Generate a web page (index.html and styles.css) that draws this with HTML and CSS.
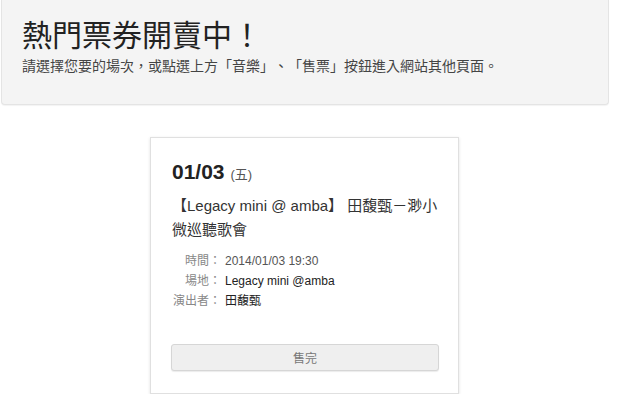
FILE: index.html
```html
<!DOCTYPE html>
<html lang="zh-Hant">
<head>
    <meta charset="UTF-8">
    <meta name="viewport" content="width=device-width, initial-scale=1.0">
    <title>熱門票券開賣中</title>
    <link rel="stylesheet" href="styles.css">
</head>
<body>
    <div class="page">
        <div class="jumbotron">
            <h1>熱門票券開賣中！</h1>
            <p>請選擇您要的場次，或點選上方「音樂」、「售票」按鈕進入網站其他頁面。</p>
        </div>

        <div class="events">
            <div class="event-card">
                <h3 class="event-date">01/03 <small>(五)</small></h3>
                <h4 class="event-title">【Legacy mini @ amba】 田馥甄－渺小微巡聽歌會</h4>
                <dl class="event-info">
                    <dt>時間：</dt>
                    <dd>2014/01/03 19:30</dd>
                    <dt>場地：</dt>
                    <dd class="dark">Legacy mini @amba</dd>
                    <dt>演出者：</dt>
                    <dd class="dark">田馥甄</dd>
                </dl>
                <button class="btn-soldout" disabled>售完</button>
            </div>
        </div>
    </div>
</body>
</html>
```

FILE: styles.css
```css
body {
    margin: 0;
    padding: 0;
    font-family: 'Liberation Sans', 'Noto Sans CJK TC', sans-serif;
    color: #333;
    background-color: #fff;
    text-spacing-trim: space-all;
}

.page {
    width: 609px;
}

.jumbotron {
    margin-left: 1px;
    height: 104px;
    padding: 0 20px;
    background-color: #f4f4f4;
    border: 1px solid #e4e4e4;
    border-top: none;
    border-radius: 0 0 4px 4px;
    box-shadow: 0 1px 1px rgba(0, 0, 0, 0.05);
}

.jumbotron h1 {
    margin: 0;
    padding-top: 18px;
    font-size: 30px;
    font-weight: normal;
    line-height: 36px;
    color: #222;
}

.jumbotron p {
    margin: 2px 0 0;
    font-size: 14px;
    line-height: 20px;
    color: #444;
}

.events {
    display: flex;
    justify-content: center;
    padding-top: 32px;
}

.event-card {
    width: 268px;
    padding: 22px 19px 22px 20px;
    background-color: #fff;
    border: 1px solid #e0e0e0;
    box-shadow: 0 1px 3px rgba(0, 0, 0, 0.12);
}

.event-date {
    margin: 0;
    padding-left: 1px;
    font-size: 21px;
    line-height: 24px;
    font-weight: bold;
    color: #222;
}

.event-date small {
    font-size: 13px;
    font-weight: normal;
    color: #555;
}

.event-title {
    margin: 7px 0 0;
    padding-left: 1px;
    font-size: 15px;
    font-weight: normal;
    line-height: 24px;
    color: #333;
}

.event-info {
    display: grid;
    grid-template-columns: 50px 1fr;
    column-gap: 4px;
    margin: 9px 0 0;
    font-size: 12px;
    line-height: 20px;
}

.event-info dt {
    text-align: right;
    color: #888;
}

.event-info dd {
    margin: 0;
    color: #555;
}

.event-info dd.dark {
    color: #222;
}

.btn-soldout {
    display: block;
    width: 100%;
    height: 27px;
    margin-top: 33px;
    font-family: inherit;
    font-size: 12px;
    color: #777;
    background-color: #efefef;
    border: 1px solid #d6d6d6;
    border-radius: 3px;
    box-shadow: 0 1px 1px rgba(0, 0, 0, 0.08);
}
```
